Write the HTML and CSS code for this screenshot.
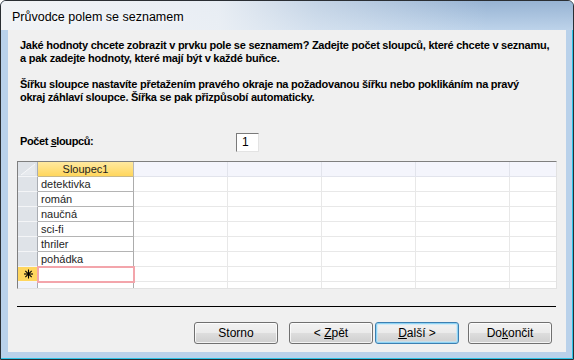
FILE: index.html
```html
<!DOCTYPE html>
<html lang="cs">
<head>
<meta charset="utf-8">
<title>Průvodce polem se seznamem</title>
<link rel="stylesheet" href="styles.css">
</head>
<body>
<div class="window">
  <div class="titlebar">Průvodce polem se seznamem</div>
  <div class="client">
    <div class="intro">
      <p>Jaké hodnoty chcete zobrazit v prvku pole se seznamem? Zadejte počet sloupců, které chcete v seznamu,<br>a pak zadejte hodnoty, které mají být v každé buňce.</p>
      <p>Šířku sloupce nastavíte přetažením pravého okraje na požadovanou šířku nebo poklikáním na pravý<br>okraj záhlaví sloupce. Šířka se pak přizpůsobí automaticky.</p>
    </div>
    <div class="count-row">
      <span class="count-label">Počet <u>s</u>loupců:</span>
      <span class="count-input">1</span>
    </div>
    <div class="datasheet">
      <div class="cell sel corner"><svg width="19" height="14" viewBox="0 0 19 14"><polygon points="3,13 17,2 17,13" fill="#e7eaee"/><line x1="3" y1="13" x2="17" y2="2" stroke="#f7f8fa" stroke-width="1"/></svg></div>
      <div class="cell head first">Sloupec1</div>
      <div class="cell head"></div><div class="cell head"></div><div class="cell head"></div><div class="cell head"></div><div class="cell head last"></div>

      <div class="cell sel"></div><div class="cell val">detektivka</div>
      <div class="cell"></div><div class="cell"></div><div class="cell"></div><div class="cell"></div><div class="cell last"></div>

      <div class="cell sel"></div><div class="cell val">román</div>
      <div class="cell"></div><div class="cell"></div><div class="cell"></div><div class="cell"></div><div class="cell last"></div>

      <div class="cell sel"></div><div class="cell val">naučná</div>
      <div class="cell"></div><div class="cell"></div><div class="cell"></div><div class="cell"></div><div class="cell last"></div>

      <div class="cell sel"></div><div class="cell val">sci-fi</div>
      <div class="cell"></div><div class="cell"></div><div class="cell"></div><div class="cell"></div><div class="cell last"></div>

      <div class="cell sel"></div><div class="cell val">thriler</div>
      <div class="cell"></div><div class="cell"></div><div class="cell"></div><div class="cell"></div><div class="cell last"></div>

      <div class="cell sel"></div><div class="cell val">pohádka</div>
      <div class="cell"></div><div class="cell"></div><div class="cell"></div><div class="cell"></div><div class="cell last"></div>

      <div class="cell sel newrow"><svg width="19" height="14" viewBox="0 0 19 14"><g stroke="#000" stroke-width="1.1"><line x1="10.5" y1="2.5" x2="10.5" y2="11.5"/><line x1="6" y1="7" x2="15" y2="7"/><line x1="7.3" y1="3.8" x2="13.7" y2="10.2"/><line x1="13.7" y1="3.8" x2="7.3" y2="10.2"/></g></svg></div>
      <div class="cell val newcell"></div>
      <div class="cell"></div><div class="cell"></div><div class="cell"></div><div class="cell"></div><div class="cell last"></div>

      <div class="cell sel partial"></div><div class="cell val partial"></div>
      <div class="cell partial"></div><div class="cell partial"></div><div class="cell partial"></div><div class="cell partial"></div><div class="cell partial last"></div>
    </div>
    <div class="sep"></div>
    <div class="buttons">
      <button class="btn btn-cancel">Storno</button>
      <button class="btn btn-back">&lt; <u>Z</u>pět</button>
      <button class="btn btn-next btn-default"><u>D</u>alší &gt;</button>
      <button class="btn btn-finish">Do<u>k</u>ončit</button>
    </div>
  </div>
</div>
</body>
</html>
```

FILE: styles.css
```css
* {
  box-sizing: border-box;
}

html,
body {
  margin: 0;
  padding: 0;
}

body {
  width: 574px;
  height: 360px;
  overflow: hidden;
  background: #ffffff;
  font-family: "Liberation Sans", Arial, sans-serif;
  color: #000;
}

.window {
  width: 574px;
  height: 360px;
  border: 1px solid #2a2e33;
  border-radius: 6px 6px 0 0;
  background: #b9d1ea;
  box-shadow: inset -1px -1px 0 #2cc3e6;
  padding: 0 7px 7px 7px;
  display: flex;
  flex-direction: column;
}

.titlebar {
  margin: 0 -7px;
  height: 29px;
  padding: 4px 0 0 11px;
  font-size: 12.5px;
  line-height: 25px;
  color: #000;
  border-radius: 5px 5px 0 0;
  text-shadow: 0 0 6px #ffffff, 0 0 10px #ffffff;
  background:
    linear-gradient(to right, rgba(241, 243, 246, 1) 0%, rgba(236, 240, 245, 0.95) 38%, rgba(226, 233, 241, 0.6) 55%, rgba(214, 226, 239, 0) 85%),
    linear-gradient(#97b3d3, #bdd3ea);
}

.client {
  flex: 1;
  background: #f0f0f0;
  padding-top: 9px;
  display: flex;
  flex-direction: column;
}

.intro p {
  margin: 0 0 13px 0;
  padding-left: 12px;
  font-size: 11px;
  line-height: 13px;
  font-weight: bold;
  letter-spacing: -0.25px;
  white-space: nowrap;
}

.count-row {
  margin-top: 16px;
  height: 19px;
  padding-left: 12px;
  display: flex;
  align-items: flex-start;
}

.count-label {
  width: 216px;
  padding-top: 2px;
  font-size: 11px;
  line-height: 13px;
  font-weight: bold;
  letter-spacing: -0.4px;
}

.count-input {
  width: 23px;
  height: 19px;
  border: 1px solid;
  border-color: #7a7a7a #e3e3e3 #e3e3e3 #7a7a7a;
  background: #ffffff;
  padding-left: 5px;
  font-size: 12px;
  line-height: 17px;
}

.datasheet {
  margin: 9px 0 0 9px;
  width: 540px;
  height: 128px;
  border: 1px solid;
  border-color: #7f7f7f #e2e2e2 #e2e2e2 #7f7f7f;
  background: #ffffff;
  display: grid;
  grid-template-columns: 20px 96px 94px 94px 94px 94px 46px;
  grid-template-rows: repeat(8, 15px) 6px;
  overflow: hidden;
}

.cell {
  border-right: 1px solid #e8e8e8;
  border-bottom: 1px solid #e8e8e8;
  background: #ffffff;
  font-size: 11px;
  line-height: 14px;
  color: #1e1e1e;
  white-space: nowrap;
  overflow: hidden;
}

.cell.last {
  border-right: 0;
}

.cell.sel {
  background: #dfe3e8;
  border-right-color: #a9adb3;
  border-bottom-color: #f4f5f7;
}

.cell.sel svg {
  display: block;
}

.cell.head {
  background: #f4f5fc;
  border-color: #e2e4ec;
}

.cell.head.first {
  background: linear-gradient(#ffe9a0, #ffd65c);
  border-right-color: #b8b8b8;
  border-bottom-color: #c7b88a;
  text-align: center;
  color: #1e1e1e;
}

.cell.val {
  padding-left: 3px;
  border-right-color: #acacac;
  border-bottom-color: #b4b4b4;
}

.cell.sel.newrow {
  background: #ffd65e;
}

.cell.newcell {
  position: relative;
  outline: 2px solid #f3a5ab;
  outline-offset: -1px;
}

.cell.partial {
  border-bottom: 0;
}

.cell.sel.partial {
  background: #eef1f9;
}

.sep {
  margin: 17px 0 0 9px;
  width: 539px;
  height: 1px;
  background: #000000;
}

.buttons {
  margin-top: 15px;
  padding-left: 186px;
  display: flex;
}

.btn {
  width: 84px;
  height: 22px;
  padding: 0;
  border: 1px solid #707070;
  border-radius: 3px;
  background: linear-gradient(#f2f2f2 0%, #ebebeb 48%, #dddddd 52%, #cfcfcf 100%);
  box-shadow: inset 0 0 0 1px rgba(255, 255, 255, 0.75);
  font-family: "Liberation Sans", Arial, sans-serif;
  font-size: 12px;
  line-height: 20px;
  color: #000;
  text-align: center;
}

.btn-back {
  margin-left: 11px;
}

.btn-next {
  margin-left: 2px;
}

.btn-finish {
  margin-left: 9px;
}

.btn-default {
  border-color: #3c7fb1;
  box-shadow: inset 0 0 0 1px #8ed3f4, inset 0 0 0 2px rgba(190, 230, 250, 0.6);
}
```
